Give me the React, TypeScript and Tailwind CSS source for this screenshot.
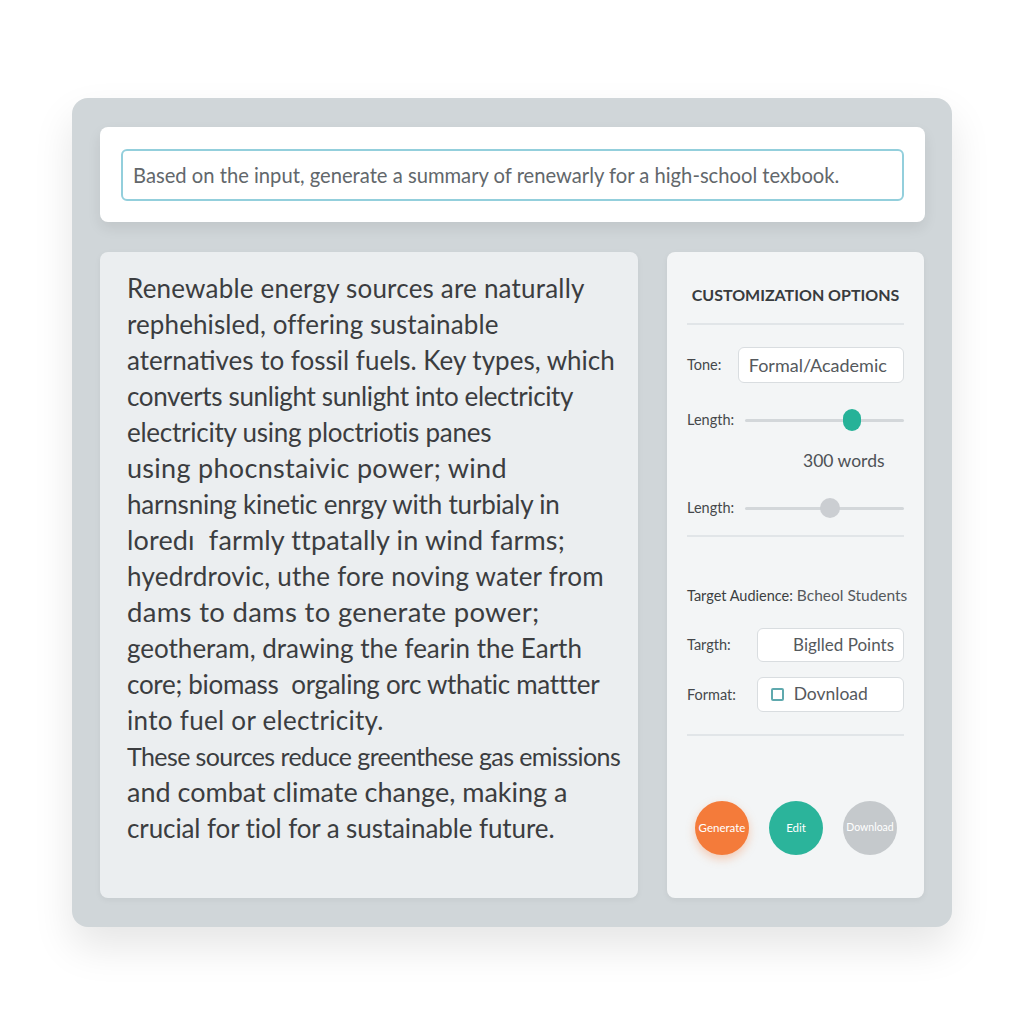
import React from 'react'

// per-line size/tracking so the lines end where the screenshot's do
const summary: { t: string; c: string }[] = [
  { t: 'Renewable energy sources are naturally', c: 'text-[26px] tracking-[0.2px]' },
  { t: 'rephehisled, offering sustainable', c: 'text-[26px] tracking-[0.1px]' },
  { t: 'aternatives to fossil fuels. Key types, which', c: 'text-[26px] tracking-[0px]' },
  { t: 'converts sunlight sunlight into electricity', c: 'text-[26px] tracking-[-0.35px]' },
  { t: 'electricity using ploctriotis panes', c: 'text-[26px] tracking-[-0.25px]' },
  { t: 'using phocnstaivic power; wind', c: 'text-[27px] tracking-[0.3px]' },
  { t: 'harnsning kinetic enrgy with turbialy in', c: 'text-[26px] tracking-[-0.2px]' },
  { t: 'loredı  farmly ttpatally in wind farms;', c: 'text-[27px] tracking-[0.15px]' },
  { t: 'hyedrdrovic, uthe fore noving water from', c: 'text-[26px] tracking-[0.25px]' },
  { t: 'dams to dams to generate power;', c: 'text-[27.5px] tracking-[0.3px]' },
  { t: 'geotheram, drawing the fearin the Earth', c: 'text-[26px] tracking-[0px]' },
  { t: 'core; biomass  orgaling orc wthatic mattter', c: 'text-[26px] tracking-[-0.3px]' },
  { t: 'into fuel or electricity.', c: 'text-[26px] tracking-[0.3px]' },
  { t: 'These sources reduce greenthese gas emissions', c: 'text-[25px] tracking-[-0.6px]' },
  { t: 'and combat climate change, making a', c: 'text-[27px] tracking-[0px]' },
  { t: 'crucial for tiol for a sustainable future.', c: 'text-[26px] tracking-[-0.1px]' },
]

function Slider({ pos, color }: { pos: number; color: string }) {
  // pos = thumb centre, px from track start
  return (
    <div className="relative flex-1 h-6 flex items-center">
      <div className="w-full h-[3px] rounded-full bg-[#d3d7da]" />
      <div
        className={`absolute top-1/2 -translate-y-1/2 -translate-x-1/2 rounded-full ${color}`}
        style={{ left: pos }}
      />
    </div>
  )
}

export default function App() {
  return (
    <div className="min-h-[1024px] w-full bg-white font-['Lato',sans-serif] pt-[98px] pl-[72px]">
      <div className="w-[880px] h-[829px] rounded-2xl bg-[#d0d6d9] shadow-[0_20px_40px_rgba(0,0,0,0.10)] pt-[29px] pl-[28px] pr-[27px] flex flex-col">
        {/* prompt bar */}
        <div className="h-[95px] bg-white rounded-lg shadow-[0_6px_14px_rgba(0,0,0,0.08)] pt-[22px] px-[21px]">
          <div className="h-[52px] border-2 border-[#93cfdc] rounded-md flex items-center pl-[10px]">
            <span className="text-[20.2px] text-[#62676b]">
              Based on the input, generate a summary of renewarly for a high-school texbook.
            </span>
          </div>
        </div>

        <div className="flex gap-[29px] mt-[30px]">
          {/* summary text */}
          <div className="w-[538px] h-[646px] bg-[#ebeef0] rounded-lg shadow-[0_2px_6px_rgba(0,0,0,0.05)] pt-[18px] pl-[27px]">
            {summary.map((line, i) => (
              <div key={i} className={`leading-[36px] text-[#3b3d40] whitespace-pre ${line.c}`}>
                {line.t}
              </div>
            ))}
          </div>

          {/* options */}
          <div className="w-[257px] h-[646px] bg-[#f3f5f6] rounded-lg shadow-[0_2px_6px_rgba(0,0,0,0.05)] pt-8 px-5 flex flex-col">
            <div className="text-center text-[16px] leading-[22px] font-bold text-[#383b3e]">
              CUSTOMIZATION OPTIONS
            </div>
            <div className="mt-[17px] h-[2px] bg-[#e1e5e8]" />

            <div className="mt-[22px] flex items-center">
              <span className="w-[51px] text-[14.5px] text-[#45484b]">Tone:</span>
              <div className="w-[167px] h-9 bg-white border border-[#d9dde0] rounded-md flex items-center pl-[10px] text-[18px] text-[#55595d]">
                Formal/Academic
              </div>
            </div>

            <div className="mt-[25px] flex items-center">
              <span className="w-[58px] text-[14.5px] text-[#45484b]">Length:</span>
              <Slider pos={107} color="w-[18px] h-[22px] bg-[#26b298]" />
            </div>

            <div className="mt-[18px] pl-[116px] text-[17.5px] leading-[22px] text-[#4d5155]">300 words</div>

            <div className="mt-6 flex items-center">
              <span className="w-[58px] text-[14.5px] text-[#45484b]">Length:</span>
              <Slider pos={85} color="w-5 h-5 bg-[#cbced2]" />
            </div>

            <div className="mt-[15px] h-[2px] bg-[#e1e5e8]" />

            <div className="mt-[48px] flex items-baseline leading-[20px] whitespace-nowrap">
              <span className="text-[14.5px] text-[#3c3f42]">Target Audience:</span>
              <span className="ml-1 text-[15.5px] text-[#55595d]">Bcheol Students</span>
            </div>

            <div className="mt-[22px] flex items-center">
              <span className="w-[70px] text-[14.5px] text-[#45484b]">Targth:</span>
              <div className="w-[148px] h-[34px] bg-white border border-[#d9dde0] rounded-md flex items-center justify-end pr-[9px] text-[17px] text-[#55595d]">
                Biglled Points
              </div>
            </div>

            <div className="mt-[15px] flex items-center">
              <span className="w-[70px] text-[14.5px] text-[#45484b]">Format:</span>
              <div className="w-[148px] h-[35px] bg-white border border-[#d9dde0] rounded-md flex items-center pl-[13px] text-[17.5px] text-[#55595d]">
                <span className="w-[13px] h-[13px] border-2 border-[#5fa9ae] rounded-[2px] mr-[10px]" />
                Dovnload
              </div>
            </div>

            <div className="mt-[22px] h-[2px] bg-[#e1e5e8]" />

            <div className="mt-[65px] pl-2 flex gap-5">
              <button className="w-[54px] h-[54px] rounded-full bg-[#f47b3a] text-white text-[11.5px] shadow-[0_4px_10px_rgba(244,123,58,0.35)]">
                Generate
              </button>
              <button className="w-[54px] h-[54px] rounded-full bg-[#2bb49b] text-white text-[11.5px]">
                Edit
              </button>
              <button className="w-[54px] h-[54px] rounded-full bg-[#c5c9cc] text-white text-[10.5px]">
                Download
              </button>
            </div>
          </div>
        </div>
      </div>
    </div>
  )
}
